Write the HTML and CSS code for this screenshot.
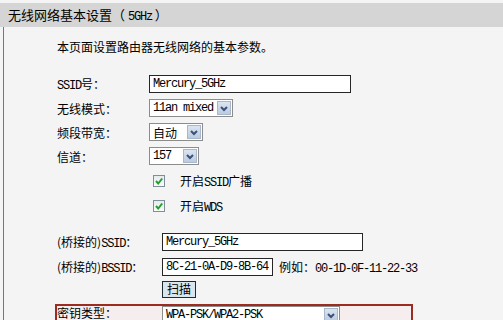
FILE: index.html
```html
<!DOCTYPE html>
<html lang="zh-CN">
<head>
    <meta charset="UTF-8">
    <title>无线网络基本设置</title>
    <link rel="stylesheet" href="styles.css">
</head>
<body>
    <div class="title">无线网络基本设置（ <span class="en">5GHz</span> ）</div>

    <div class="content">
        <p class="intro">本页面设置路由器无线网络的基本参数。</p>

        <div class="form">
            <div class="row">
                <label class="lbl"><span class="en">SSID</span>号：</label>
                <input type="text" class="txt ssid" value="Mercury_5GHz">
            </div>
            <div class="row">
                <label class="lbl">无线模式：</label>
                <div class="sel mode"><span class="val en">11an mixed</span><span class="arr"><svg width="12" height="11" viewBox="0 0 12 11"><path d="M3 4 L6 7 L9 4" fill="none" stroke="#3c4f7c" stroke-width="2"/></svg></span></div>
            </div>
            <div class="row">
                <label class="lbl">频段带宽：</label>
                <div class="sel band"><span class="val">自动</span><span class="arr"><svg width="12" height="11" viewBox="0 0 12 11"><path d="M3 4 L6 7 L9 4" fill="none" stroke="#3c4f7c" stroke-width="2"/></svg></span></div>
            </div>
            <div class="row">
                <label class="lbl">信道：</label>
                <div class="sel chan"><span class="val en">157</span><span class="arr"><svg width="12" height="11" viewBox="0 0 12 11"><path d="M3 4 L6 7 L9 4" fill="none" stroke="#3c4f7c" stroke-width="2"/></svg></span></div>
            </div>

            <div class="row cbrow">
                <span class="cb"><svg width="10" height="10" viewBox="0 0 10 10"><path d="M2 5 L4.2 7.5 L8.2 2.5" fill="none" stroke="#22a02a" stroke-width="2"/></svg></span>
                <span class="cbtext">开启<span class="en">SSID</span>广播</span>
            </div>
            <div class="row cbrow">
                <span class="cb"><svg width="10" height="10" viewBox="0 0 10 10"><path d="M2 5 L4.2 7.5 L8.2 2.5" fill="none" stroke="#22a02a" stroke-width="2"/></svg></span>
                <span class="cbtext">开启<span class="en">WDS</span></span>
            </div>

            <div class="row bridge">
                <label class="lbl wide">(桥接的)<span class="en">SSID</span>：</label>
                <input type="text" class="txt bssid-name" value="Mercury_5GHz">
            </div>
            <div class="row tall">
                <label class="lbl wide">(桥接的)<span class="en">BSSID</span>：</label>
                <input type="text" class="txt mac" value="8C-21-0A-D9-8B-64">
                <span class="hint">例如：<span class="en">00-1D-0F-11-22-33</span></span>
            </div>
            <div class="row scan">
                <button class="btn">扫描</button>
            </div>

            <div class="keybox">
                <label class="lbl wide keylbl">密钥类型：</label>
                <div class="sel key"><span class="val en">WPA-PSK/WPA2-PSK</span><span class="arr"><svg width="12" height="11" viewBox="0 0 12 11"><path d="M3 4 L6 7 L9 4" fill="none" stroke="#3c4f7c" stroke-width="2"/></svg></span></div>
            </div>
        </div>
    </div>
</body>
</html>
```

FILE: styles.css
```css
body {
    margin: 0;
    background-color: #f4f4f4;
    font-family: "Noto Sans CJK SC", "Liberation Sans", sans-serif;
    font-size: 12px;
    color: #000;
    overflow: hidden;
}
.en {
    font-family: "Liberation Mono", monospace;
    font-size: 12px;
    letter-spacing: -1.2px;
}
.title {
    margin-top: 3px;
    height: 24px;
    line-height: 23px;
    padding-left: 8px;
    background-color: #d5d5d5;
    font-size: 13px;
}
.content {
    margin-left: 3px;
    border-left: 1px solid #8f6f62;
    padding: 13px 0 0 53px;
    height: 300px;
}
.intro {
    margin: 0;
    line-height: 14px;
}
.form {
    margin-top: 18px;
}
.row {
    display: flex;
    align-items: center;
    height: 24px;
}
.lbl {
    width: 92px;
    flex: none;
    white-space: nowrap;
}
.lbl.wide {
    width: 105px;
}
.txt {
    box-sizing: border-box;
    height: 18px;
    margin: 0;
    padding: 0 3px;
    border: 1px solid #262626;
    background: #fff;
    font-family: "Liberation Mono", monospace;
    font-size: 12px;
    letter-spacing: -1.2px;
    color: #000;
}
.ssid {
    width: 202px;
}
.bssid-name {
    width: 201px;
}
.mac {
    width: 111px;
}
.sel {
    box-sizing: border-box;
    display: flex;
    align-items: center;
    height: 18px;
    border: 1px solid #8c8c8c;
    background: #fff;
}
.sel .val {
    flex: 1;
    padding-left: 3px;
    white-space: nowrap;
    overflow: hidden;
}
.sel .arr {
    box-sizing: border-box;
    width: 14px;
    height: 14px;
    margin-right: 1px;
    border: 1px solid #a7b8ce;
    background: linear-gradient(#dbe5f1, #bccbdd);
    display: flex;
    align-items: center;
    justify-content: center;
}
.mode {
    width: 84px;
}
.band {
    width: 54px;
}
.chan {
    width: 50px;
}
.key {
    width: 178px;
}
.cbrow {
    height: 25px;
    padding-left: 96px;
}
.cb {
    box-sizing: border-box;
    width: 12px;
    height: 12px;
    border: 1px solid #7f8e99;
    background: linear-gradient(#e6ebee, #fbfbfb);
    display: flex;
    align-items: center;
    justify-content: center;
}
.cbtext {
    margin-left: 15px;
}
.bridge {
    margin-top: 12px;
}
.tall {
    height: 25px;
}
.hint {
    margin-left: 6px;
}
.scan {
    height: 20px;
    padding-left: 105px;
}
.btn {
    box-sizing: border-box;
    height: 17px;
    width: 34px;
    padding: 0;
    border: 1px solid #1f2a31;
    background-color: #d9e6ee;
    font-family: "Noto Sans CJK SC", sans-serif;
    font-size: 12px;
    line-height: 14px;
    color: #000;
}
.keybox {
    display: flex;
    align-items: flex-start;
    box-sizing: border-box;
    width: 358px;
    height: 24px;
    margin: 5px 0 0 -2px;
    border: 2px solid #9c2b20;
    border-bottom: none;
    background-color: #f6eeee;
}
.keylbl {
    width: 105px;
    line-height: 14px;
}
```
